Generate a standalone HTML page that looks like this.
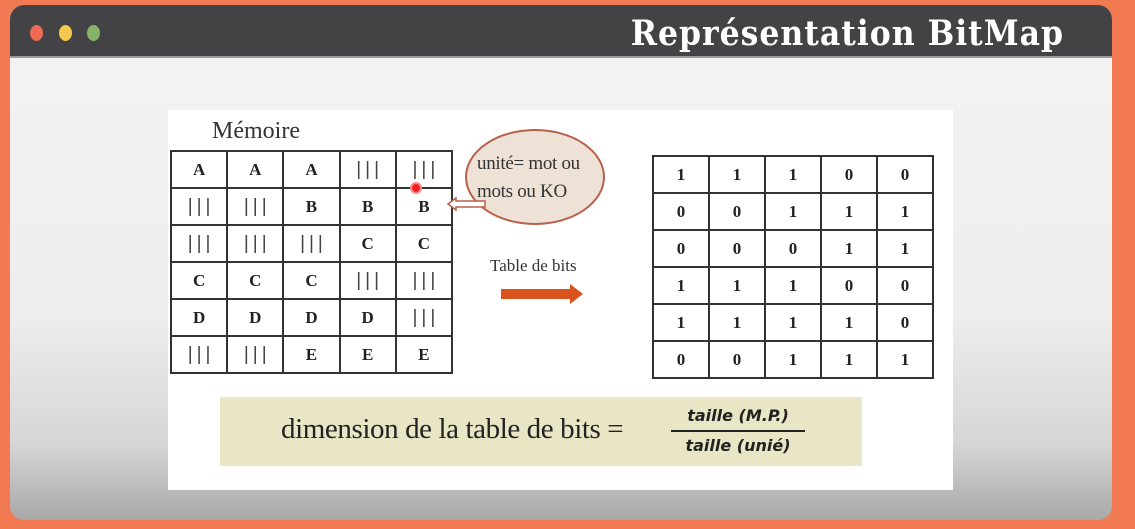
<!DOCTYPE html>
<html><head><meta charset="utf-8"><style>
body{margin:0;width:1135px;height:529px;background:#f27a52;position:relative;overflow:hidden;font-family:"Liberation Serif",serif}
.win{position:absolute;left:10px;top:5px;width:1102px;height:515px;border-radius:14px;overflow:hidden;background:linear-gradient(#f3f3f3 0%,#eeeeee 60%,#d6d6d6 85%,#a9a9a9 100%)}
.bar{position:absolute;left:0;top:0;right:0;height:51px;background:#434345;border-bottom:2px solid #999}
.dot{position:absolute;top:20px;width:13px;height:16px;border-radius:50%}
.title{position:absolute;right:48px;top:8px;color:#fff;font-size:35px;font-family:"DejaVu Serif Condensed","DejaVu Serif","Liberation Serif",serif;font-weight:bold;font-stretch:condensed;letter-spacing:1px}
.slide{position:absolute;left:158px;top:105px;width:785px;height:380px;background:#fff}
table{position:absolute;border-collapse:collapse;table-layout:fixed}
td{border:2px solid #333;text-align:center;font-weight:bold;font-size:17px;color:#222;padding:0;overflow:hidden;white-space:nowrap}
.m td{width:54px;height:35px}
.b td{width:53px;height:35px}
.bars{font-weight:normal;letter-spacing:4px;font-family:"Liberation Sans",sans-serif;font-size:19px;color:#444;text-indent:4px}
</style></head><body>
<div class="win">
<div class="bar">
<div class="dot" style="left:20px;background:#ee6a52"></div>
<div class="dot" style="left:49px;background:#f4c84e"></div>
<div class="dot" style="left:77px;background:#86b26a"></div>
<div class="title">Représentation BitMap</div>
</div>
<div class="slide"></div>
</div>
<div style="position:absolute;left:212px;top:118px;font-size:24px;color:#333">Mémoire</div>
<table class="m" style="left:170px;top:150px;width:283px">
<tr><td>A</td><td>A</td><td>A</td><td class="bars">|||</td><td class="bars">|||</td></tr>
<tr><td class="bars">|||</td><td class="bars">|||</td><td>B</td><td>B</td><td>B</td></tr>
<tr><td class="bars">|||</td><td class="bars">|||</td><td class="bars">|||</td><td>C</td><td>C</td></tr>
<tr><td>C</td><td>C</td><td>C</td><td class="bars">|||</td><td class="bars">|||</td></tr>
<tr><td>D</td><td>D</td><td>D</td><td>D</td><td class="bars">|||</td></tr>
<tr><td class="bars">|||</td><td class="bars">|||</td><td>E</td><td>E</td><td>E</td></tr>
</table>
<div style="position:absolute;left:410px;top:182px;width:8px;height:8px;border-radius:50%;background:#e22;border:2px solid #f88"></div>
<svg style="position:absolute;left:0;top:0" width="1135" height="529">
<ellipse cx="535" cy="177" rx="69" ry="47" fill="#eee2d6" stroke="#b8604a" stroke-width="2"/>
<path d="M448 204 L456 198 L456 201 L485 201 L485 207 L456 207 L456 210 Z" fill="#fff" stroke="#b8604a" stroke-width="1.5"/>
<path d="M501 289 L570 289 L570 284 L583 294 L570 304 L570 299 L501 299 Z" fill="#d9531e"/>
</svg>
<div style="position:absolute;left:477px;top:150px;font-size:19px;color:#333;line-height:28px;letter-spacing:-0.3px">unité= mot ou<br>mots ou KO</div>
<div style="position:absolute;left:490px;top:256px;font-size:17px;color:#333">Table de bits</div>
<table class="b" style="left:652px;top:155px;width:282px">
<tr><td>1</td><td>1</td><td>1</td><td>0</td><td>0</td></tr>
<tr><td>0</td><td>0</td><td>1</td><td>1</td><td>1</td></tr>
<tr><td>0</td><td>0</td><td>0</td><td>1</td><td>1</td></tr>
<tr><td>1</td><td>1</td><td>1</td><td>0</td><td>0</td></tr>
<tr><td>1</td><td>1</td><td>1</td><td>1</td><td>0</td></tr>
<tr><td>0</td><td>0</td><td>1</td><td>1</td><td>1</td></tr>
</table>
<div style="position:absolute;left:220px;top:397px;width:642px;height:69px;background:#e8e6c4"></div>
<div style="position:absolute;left:281px;top:413px;font-size:29px;color:#222;letter-spacing:-0.4px">dimension de la table de bits =</div>
<div style="position:absolute;left:671px;top:402px;width:134px;text-align:center;font-family:'DejaVu Sans',sans-serif;font-style:italic;font-weight:bold;font-size:16px;color:#222;line-height:28px">taille (M.P.)<div style="border-top:2px solid #222"></div>taille (unié)</div>
</body></html>
